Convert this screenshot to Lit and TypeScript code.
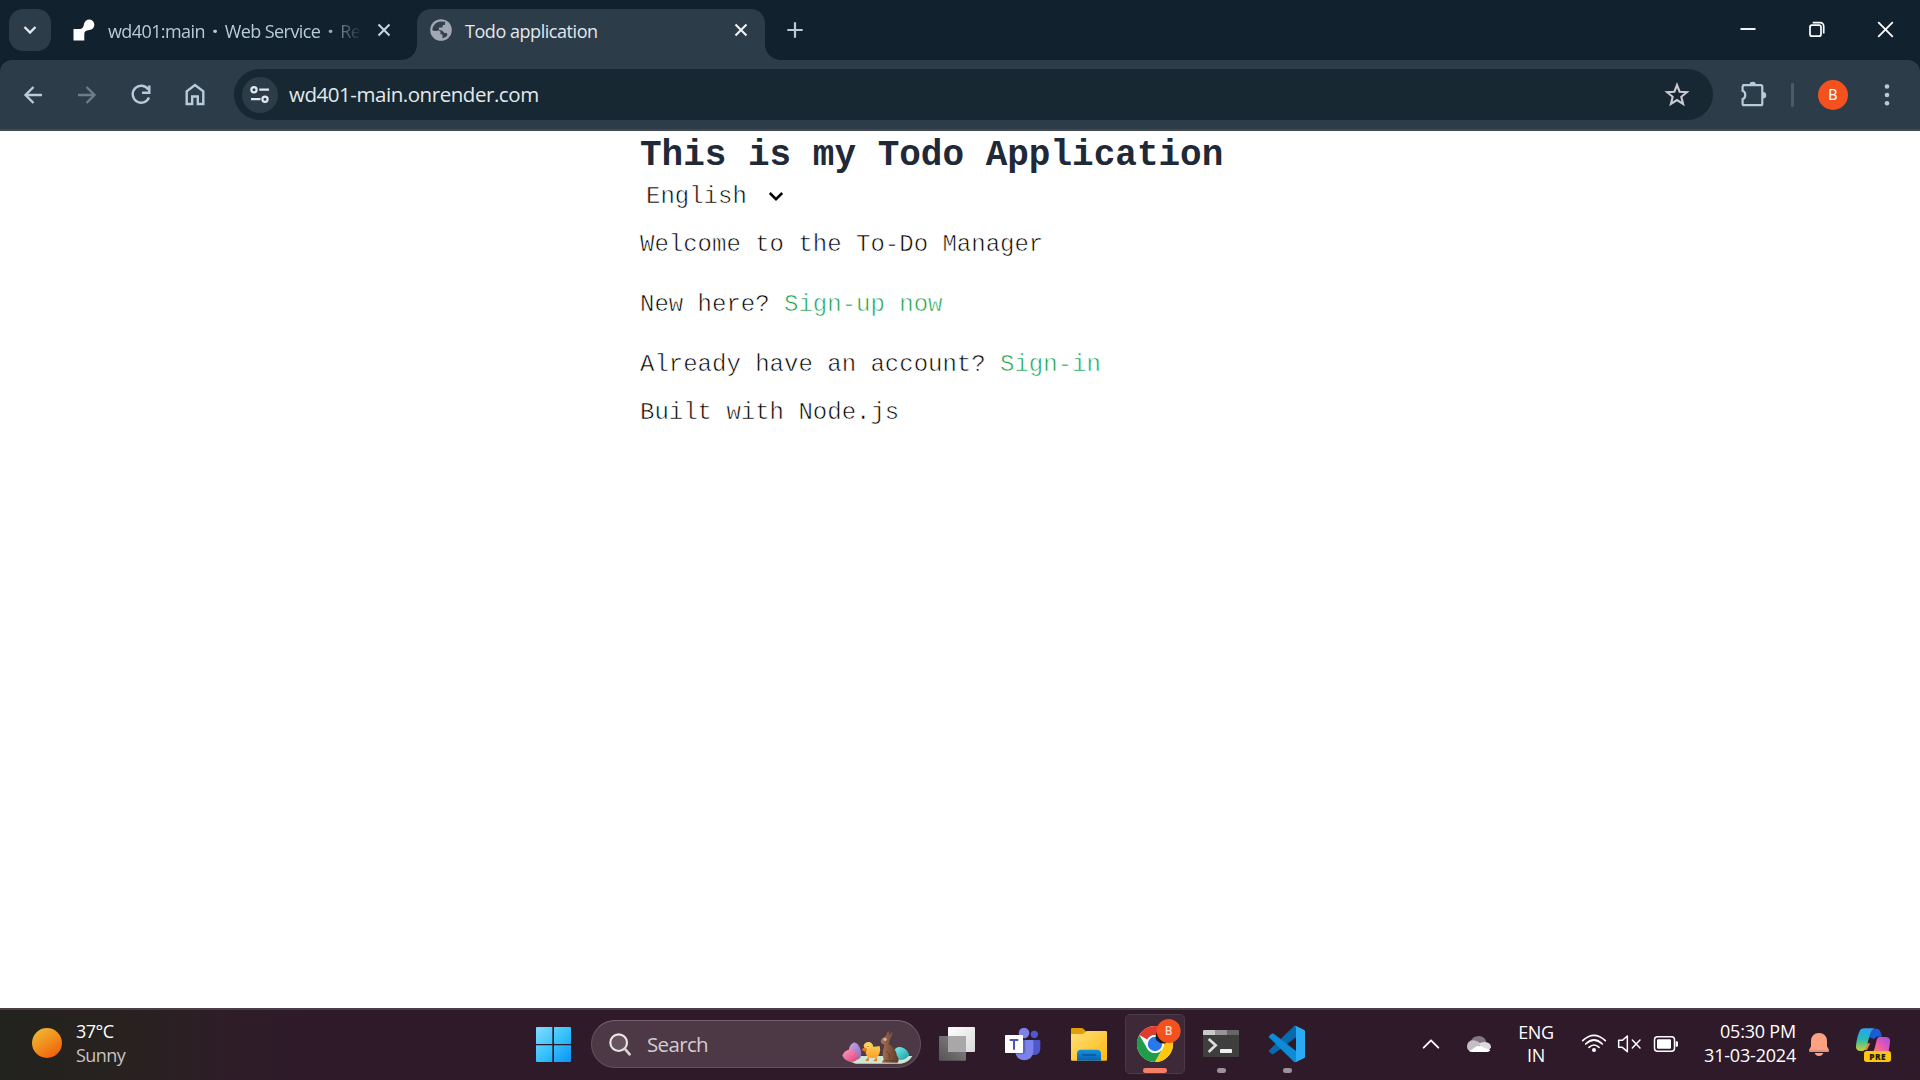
import { LitElement, html, css } from "lit";
import { customElement } from "lit/decorators.js";

@customElement("browser-tabs")
class BrowserTabs extends LitElement {
  static styles = css`
    :host { display: flex; height: 60px; background: #11212d; font: 18px/24px "Open Sans", sans-serif; color: #b9cad9; }
    svg { display: block; flex: none; }
    .search { width: 42px; height: 42px; margin: 9px 0 0 9px; border-radius: 14px; background: #2c3c48; flex: none; }
    .tab { display: flex; align-items: center; box-sizing: border-box; height: 51px; margin-top: 9px; padding-bottom: 9px; flex: none; }
    .idle { width: 342px; margin-left: 9px; padding-left: 13px; }
    .active { position: relative; width: 348px; margin-left: 15px; padding-left: 13px; background: #2c3c48; border-radius: 14px 14px 0 0; color: #e3e8ec; }
    .active::before, .active::after { content: ""; position: absolute; bottom: 0; width: 15px; height: 15px; }
    .active::before { left: -15px; background: radial-gradient(circle at 0 0, transparent 14.5px, #2c3c48 15px); }
    .active::after { right: -15px; background: radial-gradient(circle at 15px 0, transparent 14.5px, #2c3c48 15px); }
    .title { margin: 2px 0 0 13px; white-space: pre; letter-spacing: -0.45px; }
    .faded { width: 251px; letter-spacing: -0.6px; -webkit-mask-image: linear-gradient(90deg, #000 215px, transparent 255px); mask-image: linear-gradient(90deg, #000 215px, transparent 255px); }
    .dot { display: inline-block; width: 20px; text-align: center; font-weight: 800; }
    .wide { width: 263px; }
    .close { margin-left: 13px; }
    .active .close { margin-left: 1px; }
    .plus { margin: 20px 0 0 20px; }
    .grow { flex: 1; }
    .win { display: flex; gap: 45px; padding: 17px 22px 0 0; }
  `;
  render() {
    const x = (c: string, m: string) => html`<svg class="close" width="24" height="24" viewBox="0 0 24 24"><path d=${m} stroke=${c} stroke-width="2.1" fill="none" /></svg>`;
    return html`
      <svg class="search" viewBox="0 0 42 42"><path d="M15.5 18l5.5 5.5 5.500-5.500" stroke="#e1e6ea" stroke-width="2.4" fill="none" /></svg>
      <div class="tab idle">
        <svg width="22" height="24" viewBox="0 0 22 24"><path d="M.5 11H6c3.500 0 4.500-2 5-5a5.200 5.200 0 1 1 5.300 6c-3.500.3-5 1.500-5 4v6.500H.5z" fill="#fff" /></svg>
        <span class="title faded">wd401:main<span class="dot">·</span>Web Service<span class="dot">·</span>Re</span>
        ${x("#c5d5e2", "M6.500 6.500l11 11M17.500 6.500l-11 11")}
      </div>
      <div class="tab active">
        <svg width="22" height="24" viewBox="0 0 22 24"><circle cx="11" cy="12" r="10.800" fill="#a2a8b1" /><path d="M11.500 3.400A8.700 8.700 0 0 0 2.500 12c2 .1 3.500.1 6 .2l2 1.500v2.500l2 .4v3.700a8.700 8.700 0 0 0 5-3l-.8-2.300h-2.300l-2.400-2.500-3-.4V9.400h3.500l.4-2.300h2l.4-3.300z" fill="#2c3c48" opacity=".95"/><path d="M3 9.500l3.500.3 2 2.100-2 1.200-4-.6z" fill="#2c3c48"/></svg>
        <span class="title wide">Todo application</span>
        ${x("#f0f4f6", "M6.500 6.500l11 11M17.500 6.500l-11 11")}
      </div>
      <svg class="plus" width="20" height="20" viewBox="0 0 20 20"><path d="M10 2.300v15.400M2.300 10h15.400" stroke="#b9cad9" stroke-width="2.2" /></svg>
      <div class="grow"></div>
      <div class="win">
        <svg width="24" height="24" viewBox="0 0 24 24"><path d="M4.500 12h15" stroke="#fff" stroke-width="1.9" /></svg>
        <svg width="24" height="24" viewBox="0 0 24 24"><rect x="5" y="8.200" width="11" height="11" rx="2" fill="none" stroke="#fff" stroke-width="1.700" /><path d="M7.700 5.700h7.500a3.500 3.500 0 0 1 3.500 3.500v7.200" fill="none" stroke="#fff" stroke-width="1.700" /></svg>
        <svg width="24" height="24" viewBox="0 0 24 24"><path d="M4.200 5.200l14.600 14.600M18.800 5.200L4.200 19.800" stroke="#fff" stroke-width="1.800" /></svg>
      </div>`;
  }
}

@customElement("browser-toolbar")
class BrowserToolbar extends LitElement {
  static styles = css`
    :host { display: block; background: #11212d; font-family: "Open Sans", sans-serif; }
    .bar { display: flex; align-items: center; box-sizing: border-box; height: 71px; padding: 0 17px 0 18px; background: #2c3c48; border-bottom: 2px solid #434850; border-radius: 12px 12px 0 0; }
    svg { display: block; flex: none; }
    .nav { display: flex; gap: 24px; width: 216px; }
    .omni { display: flex; align-items: center; box-sizing: border-box; width: 1479px; height: 51px; padding: 0 21px 0 8px; border-radius: 26px; background: #172833; flex: none; }
    .info { width: 36px; height: 36px; border-radius: 50%; background: #2c3c48; }
    .url { flex: 1; margin: 0 0 2px 11px; font-size: 20.5px; line-height: 30px; letter-spacing: -0.45px; color: #e3e8ec; }
    .ext { margin-left: 25px; }
    .sep { width: 3px; height: 24px; margin-left: 23px; border-radius: 1px; background: #4b5c69; }
    .avatar { display: grid; place-items: center; width: 30px; height: 30px; margin-left: 24px; border-radius: 50%; background: #f4511e; color: #fff; font: 15px/20px Roboto, sans-serif; }
    .menu { margin-left: 27px; }
  `;
  render() {
    return html`<div class="bar">
      <div class="nav">
        <svg width="30" height="30" viewBox="0 0 30 30"><path d="M24 15H8M15.500 7L7.500 15l8 8" fill="none" stroke="#b9cad9" stroke-width="2.400" /></svg>
        <svg width="30" height="30" viewBox="0 0 30 30"><path d="M6 15h16M14.500 7l8 8-8 8" fill="none" stroke="#6f7d89" stroke-width="2.400" /></svg>
        <svg width="30" height="30" viewBox="0 0 30 30"><path d="M22.300 9.500A8.500 8.500 0 1 0 23 17.600" fill="none" stroke="#b9cad9" stroke-width="2.400" /><path d="M23.300 5.500v7.300h-7.200" fill="none" stroke="#b9cad9" stroke-width="2.400" /></svg>
        <svg width="30" height="30" viewBox="0 0 30 30"><path d="M6.700 24V11.300L15 5l8.300 6.300V24h-5.500v-7.500h-5.600V24z" fill="none" stroke="#b9cad9" stroke-width="2.400" /></svg>
      </div>
      <div class="omni">
        <svg class="info" viewBox="0 0 36 36"><g fill="none" stroke="#e3e8ec" stroke-width="2.200"><circle cx="12" cy="12.700" r="2.600" /><path d="M17.300 12.700H27M9 22.200h9.500" /><circle cx="23" cy="22.200" r="2.600" /></g></svg>
        <span class="url">wd401-main.onrender.com</span>
        <svg width="30" height="30" viewBox="0 0 30 30"><path d="M15 5l2.600 6.700 7.300.5-5.600 4.600 1.800 7.100L15 20l-6.100 3.900 1.800-7.100-5.600-4.600 7.300-.5z" fill="none" stroke="#c9cbd0" stroke-width="2.100" /></svg>
      </div>
      <svg class="ext" width="30" height="30" viewBox="0 0 30 30"><path d="M5.500 5.500h17.500a1.500 1.500 0 0 1 1.500 1.500v17a1.500 1.500 0 0 1-1.500 1.500H6.300a1.500 1.500 0 0 1-1.500-1.500v-4.600c3.500-1 3.500-7.300 0-8.300V7z" transform="translate(-.2 -.3)" fill="none" stroke="#b9cad9" stroke-width="2.200" /><path d="M11.500 5a3.200 3.200 0 0 1 6.400 0zM25 12a3.200 3.200 0 0 1 0 6.400z" fill="#b9cad9" /></svg>
      <div class="sep"></div>
      <div class="avatar">B</div>
      <svg class="menu" width="24" height="30" viewBox="0 0 24 30"><g fill="#b9cad9"><circle cx="12" cy="6.500" r="2.300" /><circle cx="12" cy="15" r="2.300" /><circle cx="12" cy="23.300" r="2.300" /></g></svg>
    </div>`;
  }
}

@customElement("todo-page")
class TodoPage extends LitElement {
  static styles = css`
    :host { display: block; box-sizing: border-box; height: 877px; padding-left: 640px; background: #fff; color: #000; font: 24px/36px "Liberation Mono", monospace; -webkit-text-stroke: 0.6px #fff; }
    h1 { margin: 0; padding-top: 1px; font-size: 36px; line-height: 47px; color: #1f2937; -webkit-text-stroke: 0; }
    .lang { display: flex; align-items: center; padding-left: 6px; height: 36px; }
    .lang svg { margin: -2px 0 0 20px; }
    p { margin: 12px 0 24px; }
    .last { margin-bottom: 12px; }
    a { color: #16a34a; }
    h1, .lang, p, .built { white-space: pre; }
  `;
  render() {
    return html`
      <h1>This is my Todo Application</h1>
      <div class="lang"><span>English</span><svg width="18" height="18" viewBox="0 0 18 18"><path d="M2.800 6l6.200 6.200L15.200 6" fill="none" stroke="#000" stroke-width="2.500" /></svg></div>
      <p>Welcome to the To-Do Manager</p>
      <p>New here? <a>Sign-up now</a></p>
      <p class="last">Already have an account? <a>Sign-in</a></p>
      <div class="built">Built with Node.js</div>`;
  }
}

@customElement("task-bar")
class TaskBar extends LitElement {
  static styles = css`
    :host { display: flex; align-items: center; height: 72px; box-sizing: border-box; background: linear-gradient(#4b4048, #4b4048) 0 0 / 100% 2px no-repeat, linear-gradient(90deg, #22221f 0, #27221f 110px, #2e1e27 220px, #2f1a2a 310px); font: 18px/24px "Open Sans", sans-serif; color: #fff; }
    svg { display: block; flex: none; height: 72px; }
    .weather { display: flex; align-items: center; width: 534px; flex: none; }
    .sun { width: 30px; height: 30px; margin: 0 14px 2px 32px; border-radius: 50%; background: linear-gradient(145deg, #f2c037, #f08e1d 50%, #f2620e 85%); }
    .lines { padding-bottom: 2px; letter-spacing: -0.55px; }
    .dim { color: #c6c4c4; }
    .search { display: flex; align-items: center; box-sizing: border-box; width: 330px; height: 48px; margin-left: 18px; border: 1.500px solid #65525f; border-top-color: #75646f; border-radius: 24px; background: #4c3945; overflow: hidden; flex: none; }
    .search svg { margin-left: 11px; }
    .search .label { margin-left: 9px; width: 192px; font-size: 20.500px; letter-spacing: -0.65px; color: #d3cdd1; }
    .search .art { margin-left: 0; }
    .s1 { margin-left: 14px; } .s2 { margin-left: 20px; } .s3 { margin-left: 21px; } .s4 { margin-left: 13px; } .s5 { margin-left: 14px; } .s6 { margin-left: 24px; }
    .chev { margin-left: 112px; }
    .cloud { margin-left: 22px; }
    .lang { width: 60px; margin-left: 12px; text-align: center; line-height: 23px; letter-spacing: -0.4px; flex: none; }
    .net { margin-left: 12px; }
    .clock { width: 110px; margin-left: 5px; padding-bottom: 2px; text-align: right; letter-spacing: -0.200px; flex: none; }
    .bell { margin-left: 9px; }
    .pilot { margin-left: 20px; }
    text { font-family: "Open Sans", sans-serif; }
  `;
  render() {
    return html`
      <div class="weather"><div class="sun"></div><div class="lines"><div>37°C</div><div class="dim">Sunny</div></div></div>
      <svg width="39" viewBox="42 24 117 216">
        <defs><linearGradient id="w" gradientUnits="userSpaceOnUse" x1="48" y1="81" x2="153" y2="186"><stop offset="0" stop-color="#83dcff" /><stop offset=".5" stop-color="#38c3fc" /><stop offset="1" stop-color="#0a93f5" /></linearGradient></defs>
        <g fill="url(#w)"><path d="M51 81h46v51H48V84q0-3 3-3zM102 81h48q3 0 3 3v48h-51zM48 136h49v50H51q-3 0-3-3zM102 136h51v47q0 3-3 3h-48z" /></g>
      </svg>
      <div class="search">
        <svg width="35" viewBox="250 24 105 216"><circle cx="297" cy="128" r="25" fill="#66555f" stroke="#e9e6e8" stroke-width="6.500" /><path d="M315 146l15 17" stroke="#d8d3d6" stroke-width="8" stroke-linecap="round" /></svg>
        <span class="label">Search</span>
        <svg class="art" width="75" viewBox="960 24 225 216">
          <defs>
            <linearGradient id="e1" x1="0" y1="0" x2="1" y2="1"><stop offset="0" stop-color="#ff9cc0" /><stop offset="1" stop-color="#d94076" /></linearGradient>
            <linearGradient id="e2" x1="0" y1="0" x2="1" y2="1"><stop offset="0" stop-color="#cfa5e6" /><stop offset="1" stop-color="#8a69b6" /></linearGradient>
            <linearGradient id="e3" x1="0" y1="0" x2="1" y2="1"><stop offset="0" stop-color="#7bf0ec" /><stop offset="1" stop-color="#159aa5" /></linearGradient>
            <linearGradient id="rb" x1="0" y1="0" x2="1" y2="0"><stop offset="0" stop-color="#a87455" /><stop offset="1" stop-color="#5d3826" /></linearGradient>
            <linearGradient id="ck" x1="0" y1="0" x2="0" y2="1"><stop offset="0" stop-color="#ffd75a" /><stop offset="1" stop-color="#fba02c" /></linearGradient>
          </defs>
          <path d="M985 176q10-8 30-8h165q-10 19-34 23H1010q-16-4-25-15z" fill="#cfe6d3" />
          <path d="M1003 128q14-3 23 24 4 23-11 27-20-3-26-27 2-18 14-24z" fill="url(#e2)" />
          <path d="M970 166q8-18 25-17 18 3 23 21-4 16-23 16-20-4-25-20z" fill="url(#e1)" />
          <path d="M1125 152q8-14 22-10 18 5 24 23-10 15-28 15-13-2-18-28z" fill="url(#e3)" />
          <path d="M1034 136q7-13 20-9 8 4 9 13 12 0 19-2 4 14-1 25-7 13-22 11-16-1-19-14 0-7 2-10-5-1-6-5z" fill="url(#ck)" />
          <path d="M1036 144l-7 5 8 5 7-6zM1048 172v9h-8m32-8v9h-8" fill="#f47a20" stroke="#e66d19" stroke-width="3" />
          <circle cx="1047" cy="139" r="4" fill="#fff0a0" /><circle cx="1047" cy="139" r="2" fill="#5b3a12" />
          <path d="M1085 124q2-10 15-15l7-15q5 1 3 12l8-10q6 2-1 15l-5 8q0 9-3 13 23 14 25 35 5 5 5 14l-3 7h-46q-2-6 4-9-5-13-2-27l4-18q-9-1-11-10z" fill="url(#rb)" />
          <circle cx="1098" cy="118" r="5" fill="#c9b8af" /><path d="M1102 154q14 7 8 23M1096 182h30" stroke="#50301f" stroke-width="2" fill="none" />
        </svg>
      </div>
      <svg class="s1" width="45" viewBox="45 24 135 216">
        <defs><linearGradient id="tv" x1="0" y1="0" x2="1" y2="1"><stop offset="0" stop-color="#fff" /><stop offset="1" stop-color="#d8d8d8" /></linearGradient><linearGradient id="tg" x1="1" y1="0" x2="0" y2="1"><stop offset="0" stop-color="#8a8888" /><stop offset="1" stop-color="#555354" /></linearGradient></defs>
        <rect x="57" y="108" width="81" height="74" rx="3" fill="url(#tg)" /><rect x="84" y="81" width="81" height="75" rx="3" fill="url(#tv)" /><path d="M84 108h54v48H87q-3 0-3-3z" fill="#a9a7a8" />
      </svg>
      <svg class="s2" width="45" viewBox="240 24 135 216">
        <circle cx="343" cy="103" r="11" fill="#5059c9" /><path d="M325 120h32q4 0 4 4v23q-2 18-19 18-17 0-17-18z" fill="#5059c9" />
        <circle cx="312" cy="99" r="16" fill="#7b83eb" /><path d="M286 120h51q3 0 3 3v31q-2 26-27 27-26-1-27-27z" fill="#7b83eb" />
        <path d="M309 120h7v35q-1 7-8 7h-20l-2-5h23z" fill="#5e64bd" />
        <rect x="255" y="105" width="54" height="54" rx="2" fill="#fff" /><path d="M269 117h26v6h-10v26h-6v-26h-10z" fill="#4b53bc" />
      </svg>
      <svg class="s3" width="45" viewBox="438 24 135 216">
        <defs><linearGradient id="fo" x1="0" y1="0" x2="1" y2="1"><stop offset="0" stop-color="#ffe07a" /><stop offset="1" stop-color="#fdb90f" /></linearGradient><linearGradient id="fb" x1="0" y1="0" x2="0" y2="1"><stop offset="0" stop-color="#1292df" /><stop offset="1" stop-color="#0a61b4" /></linearGradient></defs>
        <path d="M453 87q0-3 3-3h28q4 0 7 3l8 8-10 20h-36z" fill="#e09f09" /><path d="M453 102h33q5 0 8-4 3-5 8-5h56q3 0 3 3v83q0 3-3 3H456q-3 0-3-3z" fill="url(#fo)" />
        <path d="M471 182v-21q0-12 12-12h48q12 0 12 12v21z" fill="url(#fb)" /><path d="M486 165h42" stroke="#084a8c" stroke-width="3.500" />
      </svg>
      <svg class="s4" width="62" viewBox="612 24 186 216">
        <rect x="616.500" y="43.500" width="177" height="177" rx="13" fill="#3d2938" stroke="#4b3a47" stroke-width="3" />
        <circle cx="705" cy="132" r="54" fill="#fff" />
        <path d="M658.200 105A54 54 0 0 1 751.800 105H705a27 27 0 0 0-23.400 13.500z" fill="#e33b2e" />
        <path d="M658.200 105A54 54 0 0 0 705 186l23.400-40.500a27 27 0 0 1-46.800 0z" fill="#219c4a" />
        <path d="M751.800 105A54 54 0 0 1 705 186l23.400-40.500A27 27 0 0 0 705 105z" fill="#fdc80e" />
        <circle cx="705" cy="132" r="27" fill="#fff" /><circle cx="705" cy="132" r="21.500" fill="#2878ec" />
        <path d="M716 87q-14 20-7 34 14 14 30 8z" fill="#1c1a1c" /><circle cx="746" cy="93" r="36" fill="#f4511e" /><text x="746" y="105" font-size="35" font-weight="600" fill="#ffdccd" text-anchor="middle">B</text>
        <rect x="669" y="204" width="72" height="15" rx="7" fill="#f57f67" />
      </svg>
      <svg class="s5" width="42" viewBox="840 24 126 216">
        <rect x="849" y="90" width="108" height="81" rx="4" fill="#3e3e3e" /><path d="M853 90h32v15h-36V94q0-4 4-4z" fill="#c9c9c9" /><path d="M885 90h36v15h-36z" fill="#969696" /><path d="M921 90h32q4 0 4 4v11h-36z" fill="#666" />
        <path d="M866 117l21 19-21 20" fill="none" stroke="#dedede" stroke-width="8" /><rect x="900" y="147" width="36" height="12" rx="2" fill="#f0f0f0" /><rect x="891" y="204" width="27" height="15" rx="7" fill="#9d929b" />
      </svg>
      <svg class="s6" width="42" viewBox="1038 24 126 216">
        <path d="M1048 150q-3 3 0 6l7 6q3 2 6 0l67-50V79q-4-3-8 1z" fill="#0769ae" /><path d="M1048 113q-3-3 0-6l7-6q3-2 6 0l67 52v32q-4 3-8-1z" fill="#0d8bd6" /><path d="M1122 78q2-2 6 0l24 11q3 2 3 5v76q0 3-3 5l-24 11q-4 1-6-1 6 1 6-6V84q0-6-6-6z" fill="#2aaaf2" />
        <rect x="1089" y="204" width="27" height="15" rx="7" fill="#9d929b" />
      </svg>
      <svg class="chev" width="22" viewBox="60 24 66 216"><path d="M71 143l22-22 22 22" fill="none" stroke="#fff" stroke-width="5.500" stroke-linecap="round" stroke-linejoin="round" /></svg>
      <svg class="cloud" width="30" viewBox="192 24 90 216">
        <path d="M213 122q5-13 24-14 18 1 22 18l-22 10z" fill="#817780" /><path d="M201 138q2-18 21-17 12 2 22 12l-33 21q-10-3-10-16z" fill="#c5bfc4" /><path d="M236 132q9-8 24-5 13 3 13 15l-8 12-24-15z" fill="#ddd9dc" /><path d="M207 153q10-4 18-11 10-9 22-2l24 11q-3 5-10 5H217q-7 0-10-3z" fill="#fff" />
      </svg>
      <div class="lang"><div>ENG</div><div>IN</div></div>
      <svg class="net" width="103" viewBox="531 24 309 216">
        <g fill="none" stroke="#fff" stroke-width="5" stroke-linecap="round"><path d="M545 122q34-32 68 0M554 132q25-24 50 0M564 142q15-14 30 0" /></g><circle cx="579" cy="150" r="6" fill="#fff" />
        <path d="M653 121h11l15-13v47l-15-13h-11z" fill="none" stroke="#fff" stroke-width="4.500" stroke-linejoin="round" /><path d="M694 120l23 24M717 120l-23 24" stroke="#fff" stroke-width="4.500" stroke-linecap="round" />
        <rect x="760.500" y="110.500" width="60" height="43" rx="9" fill="none" stroke="#fff" stroke-width="4.500" /><rect x="768" y="118" width="42" height="28" rx="3" fill="#fff" /><path d="M824 124h4q3 0 3 4v8q0 4-3 4h-4z" fill="#fff" />
      </svg>
      <div class="clock"><div>05:30 PM</div><div>31-03-2024</div></div>
      <svg class="bell" width="28" viewBox="342 24 84 216"><path d="M360 123q1-23 24-24 23 1 24 24v16l6 11q1 6-4 6h-52q-5 0-4-6l6-11zM371 159h26q-3 9-13 9t-13-9z" fill="#fca283" /><path d="M355 153h58" stroke="#c78072" stroke-width="3" /></svg>
      <svg class="pilot" width="40" viewBox="486 24 120 216">
        <defs><linearGradient id="p1" x1="0" y1="0" x2="0" y2="1"><stop offset="0" stop-color="#2ba2ee" /><stop offset=".5" stop-color="#27bdb4" /><stop offset="1" stop-color="#d3cf2c" /></linearGradient><linearGradient id="p2" x1="1" y1="0" x2="0" y2="1"><stop offset="0" stop-color="#a04be8" /><stop offset=".55" stop-color="#ec5bab" /><stop offset="1" stop-color="#ff8a55" /></linearGradient></defs>
        <path d="M532 86h25q10 0 13 14l3 11q-17-4-24 6l-22-9z" fill="#1b5cd5" />
        <path d="M500 150h28l10-20h-20z" fill="#ef7a43" />
        <path d="M520 85h31q-10 3-14 18l-10 35q-5 15-13 15-21 2-19-16 3-27 10-42 4-10 15-10z" fill="url(#p1)" />
        <path d="M564 111h22q13 1 11 17l-5 30h-50q7-3 10-17l5-21q2-8 7-9z" fill="url(#p2)" />
        <rect x="519" y="153" width="81" height="33" rx="8" fill="#fcc70c" /><text x="560" y="179" font-size="25" font-weight="800" letter-spacing="1.500" fill="#221708" text-anchor="middle">PRE</text>
      </svg>`;
  }
}

@customElement("app-root")
class AppRoot extends LitElement {
  static styles = css`
    :host { display: flex; flex-direction: column; width: 1920px; height: 1080px; overflow: hidden; }
  `;
  render() {
    return html`<browser-tabs></browser-tabs><browser-toolbar></browser-toolbar><todo-page></todo-page><task-bar></task-bar>`;
  }
}
